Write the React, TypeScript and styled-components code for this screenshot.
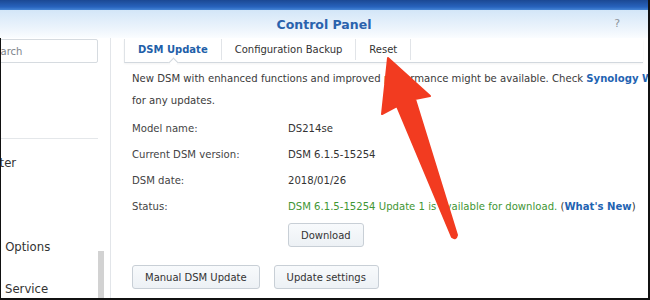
import styled, { createGlobalStyle } from "styled-components"

const GlobalStyle = createGlobalStyle`
  html, body {
    margin: 0;
    padding: 0;
    background: #ffffff;
  }
  body {
    font-family: "DejaVu Sans", Verdana, sans-serif;
  }
`

const sidebarItems = [
  { label: "Theme", gapBefore: 16 },
  { label: "Info Center", divider: true },
  { label: "Theme" },
  { label: "Regional Options" },
  { label: "Indexing Service" },
]

const App = () => {
  return (
    <Frame>
      <GlobalStyle />
      <TopBar />
      <TitleBar>
        <Title>Control Panel</Title>
        <Help>?</Help>
      </TitleBar>
      <Body>
        <Sidebar>
          <SidebarInner>
            <SearchBox>Search</SearchBox>
            {sidebarItems.map((item, i) => (
              <div key={i}>
                {item.divider && <SidebarDivider />}
                <SidebarItem $gap={item.gapBefore}>{item.label}</SidebarItem>
              </div>
            ))}
          </SidebarInner>
          <ScrollTrack>
            <ScrollThumb />
          </ScrollTrack>
        </Sidebar>

        <Main>
          <TabStrip>
            <Tab $active>DSM Update</Tab>
            <Tab>Configuration Backup</Tab>
            <Tab>Reset</Tab>
          </TabStrip>

          <Panel>
            <Intro>
              <span>
                New DSM with enhanced functions and improved performance might be available. Check{" "}
                <Link>Synology Website</Link>
              </span>
              <span>for any updates.</span>
            </Intro>

            <InfoGrid>
              <Label>Model name:</Label>
              <Value>DS214se</Value>
              <Label>Current DSM version:</Label>
              <Value>DSM 6.1.5-15254</Value>
              <Label>DSM date:</Label>
              <Value>2018/01/26</Value>
              <Label>Status:</Label>
              <Value>
                <Ok>DSM 6.1.5-15254 Update 1 is available for download.</Ok> (<Link>What's New</Link>)
              </Value>
              <span />
              <ButtonCell>
                <Button>Download</Button>
              </ButtonCell>
            </InfoGrid>

            <Actions>
              <Button>Manual DSM Update</Button>
              <Button>Update settings</Button>
            </Actions>
          </Panel>
        </Main>
      </Body>

      <Arrow viewBox="0 0 650 300" width="650" height="300">
        <path
          d="M388 58 L430 96 L415 99 L457 235 Q456 240 452 237 L397 106 L382 114 Z"
          fill="#f23b20"
          stroke="#f23b20"
          strokeWidth="2"
          strokeLinejoin="round"
        />
      </Arrow>
    </Frame>
  )
}

const Frame = styled.div`
  position: relative;
  width: 650px;
  height: 300px;
  box-sizing: border-box;
  border-right: 2px solid #111;
  border-bottom: 2px solid #111;
  display: flex;
  flex-direction: column;
  overflow: hidden;
  background: #fff;
`

const TopBar = styled.div`
  height: 10px;
  flex: 0 0 10px;
  background: linear-gradient(#1b4893, #2863bd 70%, #4686d6);
`

const TitleBar = styled.div`
  flex: 0 0 28px;
  position: relative;
  display: flex;
  align-items: center;
  justify-content: center;
  background: linear-gradient(#d3e6f8, #eef5fc 70%, #fbfdff);
`

const Title = styled.div`
  font-size: 12.5px;
  font-weight: bold;
  color: #2a62ad;
  margin-top: 1px;
`

const Help = styled.div`
  position: absolute;
  right: 28px;
  top: 7px;
  font-size: 11px;
  color: #8c949c;
`

const Body = styled.div`
  flex: 1;
  display: flex;
  border-left: 1px solid #111;
  min-height: 0;
`

const Sidebar = styled.div`
  flex: 0 0 109px;
  display: flex;
  overflow: hidden;
  border-right: 1px solid #e2e5e9;
`

const SidebarInner = styled.div`
  flex: 0 0 157px;
  margin-left: -60px;
  padding-top: 1px;
`

const SearchBox = styled.div`
  height: 22px;
  border: 1px solid #d6dbe0;
  border-radius: 2px;
  box-sizing: content-box;
  padding-left: 46px;
  display: flex;
  align-items: center;
  font-size: 10px;
  color: #7d848b;
`

const SidebarDivider = styled.div`
  height: 1px;
  background: #e4e7ea;
  margin: 17px 0 3px;
`

const SidebarItem = styled.div<{ $gap?: number }>`
  height: 42px;
  margin-top: ${(p) => p.$gap ?? 0}px;
  padding-left: 10px;
  display: flex;
  align-items: center;
  font-size: 11.7px;
  color: #333;
  white-space: nowrap;
`

const ScrollTrack = styled.div`
  flex: 0 0 6px;
`

const ScrollThumb = styled.div`
  margin-top: 213px;
  height: 60px;
  background: #d2d2d2;
`

const Main = styled.div`
  flex: 1;
  min-width: 0;
  display: flex;
  flex-direction: column;
  overflow: hidden;
`

const TabStrip = styled.div`
  height: 23px;
  margin: 1px 5px 0 13px;
  display: flex;
  align-items: stretch;
  border-left: 1px solid #dfe3e7;
  border-bottom: 1px solid #d2d8de;
  box-shadow: 0 1px 2px rgba(0, 0, 0, 0.05);
`

const Tab = styled.div<{ $active?: boolean }>`
  position: relative;
  display: flex;
  align-items: center;
  padding: 0 13px;
  margin-bottom: 2px;
  border-right: 1px solid #e1e4e8;
  font-size: 10px;
  font-weight: ${(p) => (p.$active ? "bold" : "normal")};
  color: ${(p) => (p.$active ? "#1f5fa9" : "#333")};
  white-space: nowrap;

  ${(p) =>
    p.$active &&
    `
    &::after {
      content: "";
      position: absolute;
      left: 50%;
      bottom: -6px;
      width: 6px;
      height: 6px;
      margin-left: -3px;
      background: #fff;
      border-left: 1px solid #d2d8de;
      border-top: 1px solid #d2d8de;
      transform: rotate(45deg);
    }
  `}
`

const Panel = styled.div`
  padding: 5px 0 0 21px;
  font-size: 10.1px;
  color: #3a3a3a;
`

const Intro = styled.div`
  display: flex;
  flex-direction: column;
  line-height: 22px;
  white-space: nowrap;
`

const Link = styled.span`
  font-weight: bold;
  color: #1f64b2;
`

const InfoGrid = styled.div`
  margin-top: 3px;
  display: grid;
  grid-template-columns: 156px 1fr;
  grid-auto-rows: 26px;
  align-items: center;
  white-space: nowrap;
`

const Label = styled.span`
  color: #444;
`

const Value = styled.span`
  color: #333;
`

const Ok = styled.span`
  color: #3f9634;
`

const ButtonCell = styled.div`
  margin-top: 4px;
  align-self: start;
`

const Button = styled.button`
  height: 24px;
  padding: 0 12px;
  border: 1px solid #c8cfd6;
  border-radius: 3px;
  background: linear-gradient(#f8fafc, #edf1f5);
  font-family: "DejaVu Sans", Verdana, sans-serif;
  font-size: 10px;
  color: #333;
`

const Actions = styled.div`
  display: flex;
  gap: 14px;
  margin-top: 20px;
`

const Arrow = styled.svg`
  position: absolute;
  left: 0;
  top: 0;
  pointer-events: none;
`

export default App
